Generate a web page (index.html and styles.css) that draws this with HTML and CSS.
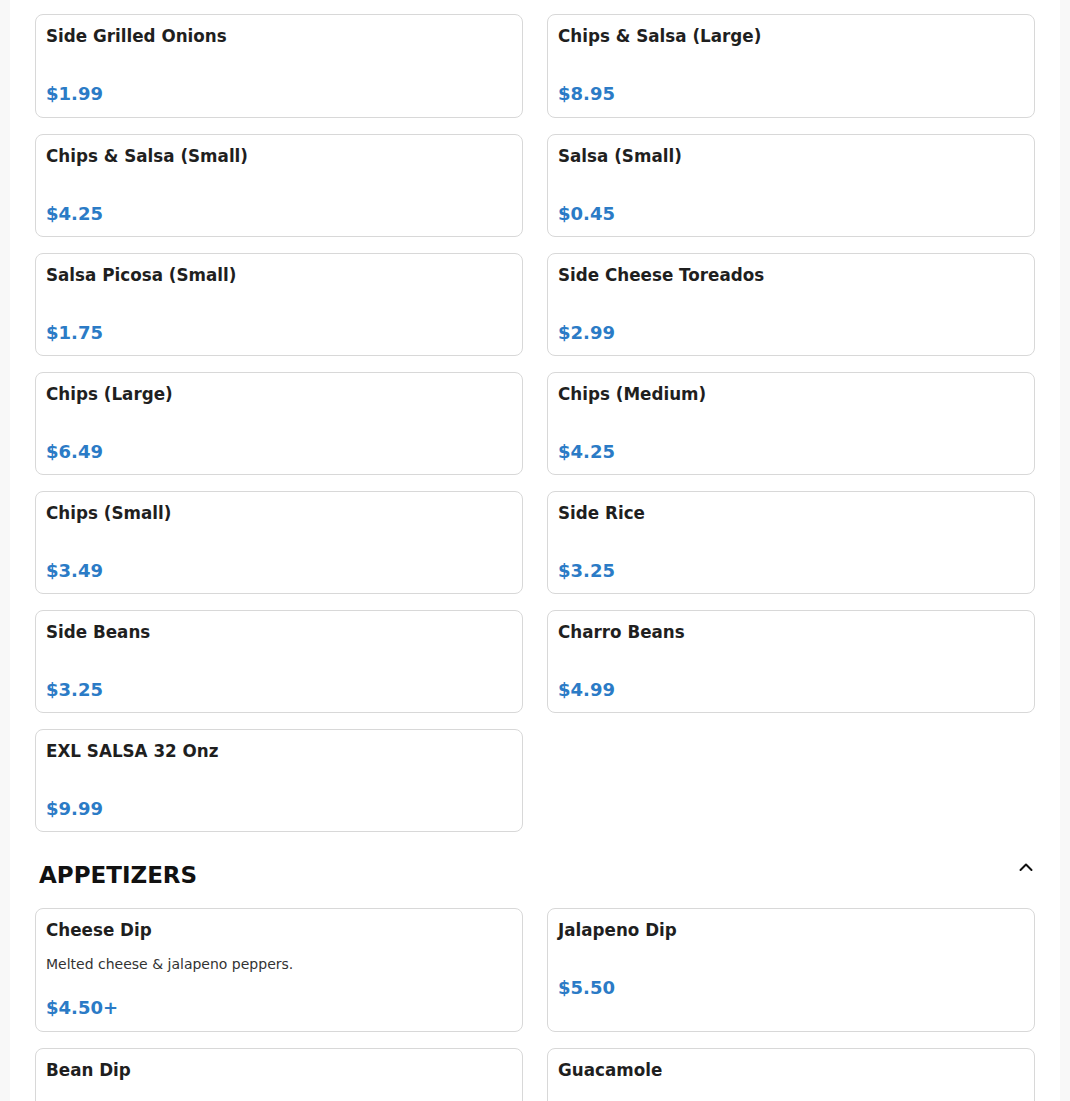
FILE: index.html
```html
<!DOCTYPE html>
<html lang="en">
<head>
<meta charset="utf-8">
<title>Menu</title>
<link rel="stylesheet" href="styles.css">
</head>
<body>
<main class="page">
  <section class="section">
    <div class="grid">
      <div class="card"><div class="name">Side Grilled Onions</div><div class="price">$1.99</div></div>
      <div class="card"><div class="name">Chips &amp; Salsa (Large)</div><div class="price">$8.95</div></div>
      <div class="card"><div class="name">Chips &amp; Salsa (Small)</div><div class="price">$4.25</div></div>
      <div class="card"><div class="name">Salsa (Small)</div><div class="price">$0.45</div></div>
      <div class="card"><div class="name">Salsa Picosa (Small)</div><div class="price">$1.75</div></div>
      <div class="card"><div class="name">Side Cheese Toreados</div><div class="price">$2.99</div></div>
      <div class="card"><div class="name">Chips (Large)</div><div class="price">$6.49</div></div>
      <div class="card"><div class="name">Chips (Medium)</div><div class="price">$4.25</div></div>
      <div class="card"><div class="name">Chips (Small)</div><div class="price">$3.49</div></div>
      <div class="card"><div class="name">Side Rice</div><div class="price">$3.25</div></div>
      <div class="card"><div class="name">Side Beans</div><div class="price">$3.25</div></div>
      <div class="card"><div class="name">Charro Beans</div><div class="price">$4.99</div></div>
      <div class="card"><div class="name">EXL SALSA 32 Onz</div><div class="price">$9.99</div></div>
    </div>
  </section>
  <section class="section">
    <div class="section-head">
      <h2 class="section-title">APPETIZERS</h2>
      <svg class="chevron" width="14" height="14" viewBox="0 0 14 14" aria-hidden="true"><path d="M1.5 10 L7 4.5 L12.5 10" fill="none" stroke="#111" stroke-width="2" stroke-linecap="round" stroke-linejoin="round"/></svg>
    </div>
    <div class="grid">
      <div class="card"><div class="name">Cheese Dip</div><div class="desc">Melted cheese &amp; jalapeno peppers.</div><div class="price">$4.50+</div></div>
      <div class="card"><div class="name">Jalapeno Dip</div><div class="desc"></div><div class="price">$5.50</div></div>
      <div class="card tall"><div class="name">Bean Dip</div></div>
      <div class="card tall"><div class="name">Guacamole</div></div>
    </div>
  </section>
</main>
</body>
</html>
```

FILE: styles.css
```css
html, body {
  margin: 0;
  padding: 0;
}
body {
  background: #f8f8f8;
  font-family: "DejaVu Sans", "Liberation Sans", sans-serif;
  color: #1f1f1f;
  overflow: hidden;
}
.page {
  margin: 0 10px;
  background: #ffffff;
  padding: 14.4px 25px 40px;
  min-height: 1200px;
}
.grid {
  display: grid;
  grid-template-columns: 1fr 1fr;
  column-gap: 24px;
  row-gap: 16px;
}
.card {
  border: 1px solid #d8d8d8;
  border-radius: 8px;
  padding: 9px 10px 11.17px;
  display: flex;
  flex-direction: column;
}
.card.tall {
  min-height: 100px;
}
.name {
  font-size: 16.75px;
  font-weight: bold;
  line-height: 24px;
  color: #1f1f1f;
  margin-bottom: 10px;
}
.desc {
  font-size: 14px;
  line-height: 20px;
  color: #333333;
  margin: 2px 0 -2px;
}
.price {
  margin-top: 25px;
  font-size: 18px;
  font-weight: bold;
  line-height: 22px;
  color: #2b7bc6;
}
.section-head {
  display: flex;
  align-items: center;
  justify-content: space-between;
  padding: 0 2px 0 4px;
  margin: 26px 0 16px;
  height: 34px;
}
.section-title {
  margin: 0;
  font-size: 23px;
  font-weight: bold;
  line-height: 34px;
  color: #111111;
}
.chevron {
  display: block;
  margin-top: -17px;
}
```
